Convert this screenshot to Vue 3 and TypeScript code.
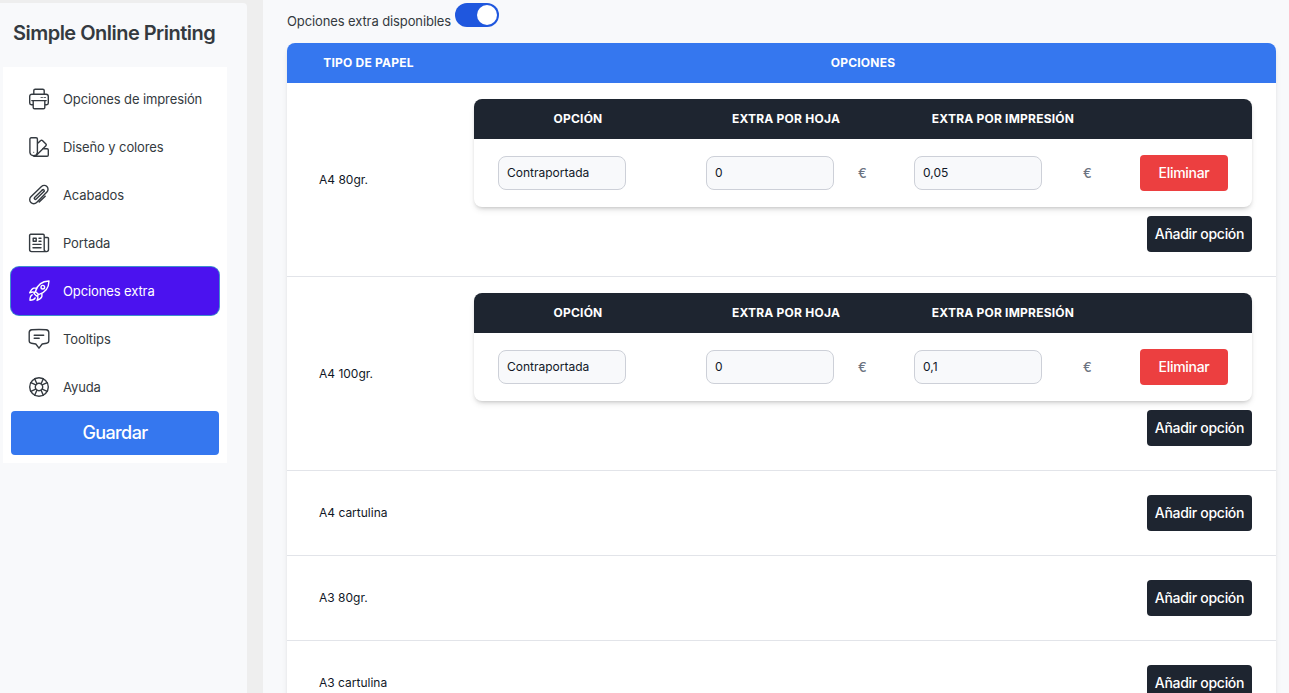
<script setup lang="ts">
import { ref } from 'vue'

interface MenuItem { label: string; icon: string }
interface Extra { name: string; sheet: string; print: string }
interface Paper { name: string; extras: Extra[] }

const menu: MenuItem[] = [
  { label: 'Opciones de impresión', icon: 'printer' },
  { label: 'Diseño y colores', icon: 'swatch' },
  { label: 'Acabados', icon: 'clip' },
  { label: 'Portada', icon: 'news' },
  { label: 'Opciones extra', icon: 'rocket' },
  { label: 'Tooltips', icon: 'chat' },
  { label: 'Ayuda', icon: 'help' },
]
const active = ref('Opciones extra')
const enabled = ref(true)
const papers = ref<Paper[]>([
  { name: 'A4 80gr.', extras: [{ name: 'Contraportada', sheet: '0', print: '0,05' }] },
  { name: 'A4 100gr.', extras: [{ name: 'Contraportada', sheet: '0', print: '0,1' }] },
  { name: 'A4 cartulina', extras: [] },
  { name: 'A3 80gr.', extras: [] },
  { name: 'A3 cartulina', extras: [] },
])
function addExtra(paper: Paper) {
  paper.extras.push({ name: '', sheet: '0', print: '0' })
}
</script>

<template>
  <div class="page">
    <aside class="sidebar">
      <h1>Simple Online Printing</h1>
      <nav>
        <a v-for="item in menu" :key="item.label" class="item" :class="{ active: item.label === active }" @click="active = item.label">
          <svg viewBox="0 0 24 24" class="icon">
            <template v-if="item.icon === 'printer'">
              <path d="M6.8 7.2V3.6a1.4 1.4 0 0 1 1.4-1.4h7.6a1.4 1.4 0 0 1 1.4 1.4v3.6M5.6 17.8H4.4a1.7 1.7 0 0 1-1.7-1.7V9.4a2.2 2.2 0 0 1 2.2-2.2h14.2a2.2 2.2 0 0 1 2.2 2.2v6.7a1.7 1.7 0 0 1-1.7 1.7h-1.2M4.8 13.6h14.4M6.2 13.6v6.9a1.3 1.3 0 0 0 1.3 1.3h9a1.3 1.3 0 0 0 1.3-1.3v-6.9" />
              <path class="thin" d="M14 10.5h1.5M17 10.5h1.6" />
            </template>
            <template v-else-if="item.icon === 'swatch'">
              <path d="M4.2 2.8h4.9a1.3 1.3 0 0 1 1.3 1.3v13.4a3.8 3.8 0 0 1-7.5 0V4.1a1.3 1.3 0 0 1 1.3-1.3zM10.5 8.6l3.2-3a1.2 1.2 0 0 1 1.7 0l3.5 3.4a1.2 1.2 0 0 1 0 1.7L9.2 20.4M15.6 13.8h4.5a1.2 1.2 0 0 1 1.2 1.2v5a1.2 1.2 0 0 1-1.2 1.2H6.7" />
              <path class="thin" d="M6.7 17.2v.3" />
            </template>
            <template v-else-if="item.icon === 'clip'">
              <path d="M19.9 8.9l-10.3 10.6a4 4 0 0 1-5.7 0 4 4 0 0 1 0-5.7L14.5 3.5a3.8 3.8 0 0 1 5.4 0 3.8 3.8 0 0 1 0 5.4M18.2 13.3l-6 5.8M16.9 8.5l-7.7 7.6a1.1 1.1 0 0 1-1.6-1.6l7.7-7.6" />
              <path d="M16.9 8.5a1.1 1.1 0 0 0-1.6-1.6" />
            </template>
            <template v-else-if="item.icon === 'news'">
              <path d="M18.2 6.5h2.2a1.1 1.1 0 0 1 1.1 1.1v11a2 2 0 0 1-2 2H4.6a2 2 0 0 1-2-2V4.4a1.1 1.1 0 0 1 1.1-1.1h12.4a1.1 1.1 0 0 1 1.1 1.1v14.2a2.1 2.1 0 0 0 2.1 2M6.2 7.2h3v3h-3zM12 7.3h2M12 10.2h2M6 13.4h8M6 16.7h8" />
            </template>
            <template v-else-if="item.icon === 'rocket'">
              <path d="M8.4 12.5C10.2 6.2 14 2.2 22 2c-.2 8-4.3 11.8-10.4 13.6zM9.4 9.1H6.7c-1.5.4-2.9 2.4-4 4.7 1.5-.7 3.1-1 4.8-.5M14.9 14.6v2.8c-.4 1.8-2.4 3-4.8 4 .8-1.7 1-3.3.6-4.8M8.4 12.5l-1.4 2 2.5 2.5 2.1-1.4M5.2 15.8c-1.5.7-2.3 2.3-2.2 5.4 2.9 0 4.5-.8 5.2-2.3" />
              <circle cx="15.8" cy="8.2" r="1.8" />
            </template>
            <template v-else-if="item.icon === 'chat'">
              <path d="M4.8 2.8c4.8-.5 9.6-.5 14.4 0a2.9 2.9 0 0 1 2.6 2.8v8.2a2.5 2.5 0 0 1-2.2 2.4l-4.4.8L12 21.2l-3.2-4.2-4.4-.8a2.5 2.5 0 0 1-2.2-2.4V5.6a2.9 2.9 0 0 1 2.6-2.8zM7.2 8.2h9.5M7.2 11.2h5" />
            </template>
            <template v-else>
              <circle cx="12" cy="12" r="9.3" /><circle cx="12" cy="12" r="3.7" />
              <path d="M7.7 3.8l2.2 5M3.8 7.7l5 2.2M16.3 3.8l-2.2 5M20.2 7.7l-5 2.2M7.7 20.2l2.2-5M3.8 16.3l5-2.2M16.3 20.2l-2.2-5M20.2 16.3l-5-2.2" />
            </template>
          </svg>
          <span>{{ item.label }}</span>
        </a>
        <button class="save">Guardar</button>
      </nav>
    </aside>

    <main>
      <div class="availability">
        <span>Opciones extra disponibles</span>
        <button class="switch" :class="{ on: enabled }" aria-label="Opciones extra disponibles" @click="enabled = !enabled"><i></i></button>
      </div>
      <section class="papers">
        <header class="papers-head"><b>TIPO DE PAPEL</b><b>OPCIONES</b></header>
        <div v-for="paper in papers" :key="paper.name" class="paper">
          <div class="paper-name">{{ paper.name }}</div>
          <div class="paper-options">
            <div v-if="paper.extras.length" class="extras">
              <div class="extras-head">
                <b>OPCIÓN</b><b>EXTRA POR HOJA</b><b>EXTRA POR IMPRESIÓN</b><b></b>
              </div>
              <div v-for="(extra, i) in paper.extras" :key="i" class="extra">
                <div><input v-model="extra.name" /></div>
                <div><input v-model="extra.sheet" /><span class="euro">€</span></div>
                <div class="wide"><input v-model="extra.print" /><span class="euro">€</span></div>
                <div><button class="remove" @click="paper.extras.splice(i, 1)">Eliminar</button></div>
              </div>
            </div>
            <button class="add" @click="addExtra(paper)">Añadir opción</button>
          </div>
        </div>
      </section>
    </main>
  </div>
</template>

<style>
body { overflow: hidden; }
</style>

<style scoped>
* { box-sizing: border-box; }
.page {
  display: flex;
  height: 693px;
  overflow: hidden;
  background: #eee;
  font-family: Inter, "Liberation Sans", sans-serif;
  font-size: 13px;
  color: #343a40;
}
button, input { font-family: inherit; border: 0; }
.sidebar {
  flex: none;
  width: 247px;
  margin: 3px 16px 0 0;
  background: #f8f9fb;
  border-top-right-radius: 4px;
}
h1 {
  margin: 0;
  height: 64px;
  padding: 15px 0 0 13px;
  font-size: 20px;
  line-height: 30px;
  font-weight: 600;
  letter-spacing: -0.52px;
  white-space: nowrap;
}
nav { width: 224px; height: 396px; margin-left: 3px; padding: 8px; background: #fff; }
.item {
  display: flex;
  align-items: center;
  gap: 12px;
  height: 48px;
  padding-left: 16px;
  border-radius: 8px;
  letter-spacing: -0.11px;
  white-space: nowrap;
}
.item.active { background: #4b12ef; color: #fff; box-shadow: 0 0 0 1px #3f8fcc; }
.icon { width: 24px; height: 24px; fill: none; stroke: currentColor; stroke-width: 1.4; stroke-linecap: round; stroke-linejoin: round; }
.thin { stroke-width: 0.8; }
.save {
  display: block;
  width: 100%;
  height: 44px;
  padding: 0 0 1px;
  border-radius: 4px;
  background: #3577ef;
  color: #fff;
  font-size: 18px;
  font-weight: 500;
  letter-spacing: -0.6px;
}
main { flex: 1; padding: 0 13px 0 24px; background: #f8f9fb; }
.availability { display: flex; gap: 4px; height: 43px; padding-top: 3px; }
.availability span { padding-top: 10px; line-height: 17px; letter-spacing: -0.11px; }
.switch { width: 44px; height: 24px; padding: 2px; border-radius: 12px; background: #9ca3af; }
.switch.on { background: #1f57de; }
.switch i { display: block; width: 20px; height: 20px; border-radius: 50%; background: #fff; }
.switch.on i { margin-left: 20px; }
.papers { border-radius: 8px; box-shadow: 0 4px 6px -1px #0000001a, 0 2px 4px -2px #0000001a; }
.papers-head {
  display: grid;
  grid-template-columns: 163px 1fr;
  height: 40px;
  padding-bottom: 2px;
  align-items: center;
  text-align: center;
  border-radius: 8px 8px 0 0;
  background: #3577ef;
  color: #fff;
  font-size: 12px;
}
b { font-weight: 700; letter-spacing: 0.22px; }
.paper {
  display: grid;
  grid-template-columns: 163px 1fr;
  align-items: center;
  border-bottom: 1px solid #e2e4e9;
  background: #fff;
  color: #111827;
  font-size: 12px;
}
.paper-name { padding: 0 0 1px 32px; line-height: 15px; }
.paper-options { display: flex; flex-direction: column; align-items: flex-end; padding: 24px; }
.extras {
  align-self: stretch;
  margin: -8px 0 9px;
  border-radius: 8px;
  box-shadow: 0 4px 6px -1px #0000001a, 0 2px 4px -2px #0000003a;
}
.extras-head, .extra { display: grid; grid-template-columns: 208px 208px 226px 136px; align-items: center; }
.extras-head { height: 40px; padding-bottom: 2px; border-radius: 8px 8px 0 0; background: #1e2530; color: #fff; text-align: center; }
.extra { height: 68px; }
.extra > div { display: flex; align-items: center; padding-left: 24px; gap: 24px; }
.extra > .wide { gap: 41px; }
input {
  width: 128px;
  height: 34px;
  padding: 0 8px 2px;
  border: 1px solid #cdd0d8;
  border-radius: 8px;
  background: #f8f9fb;
  color: #111827;
  font-size: 12px;
  outline: none;
}
.euro { color: #6b7280; font-size: 13px; font-weight: 500; }
.remove, .add { height: 36px; padding: 0 0 2px; border-radius: 4px; color: #fff; font-size: 14px; font-weight: 500; letter-spacing: -0.3px; white-space: nowrap; }
.remove { width: 88px; background: #ec3f40; }
.add { width: 105px; background: #1e2530; }
</style>
